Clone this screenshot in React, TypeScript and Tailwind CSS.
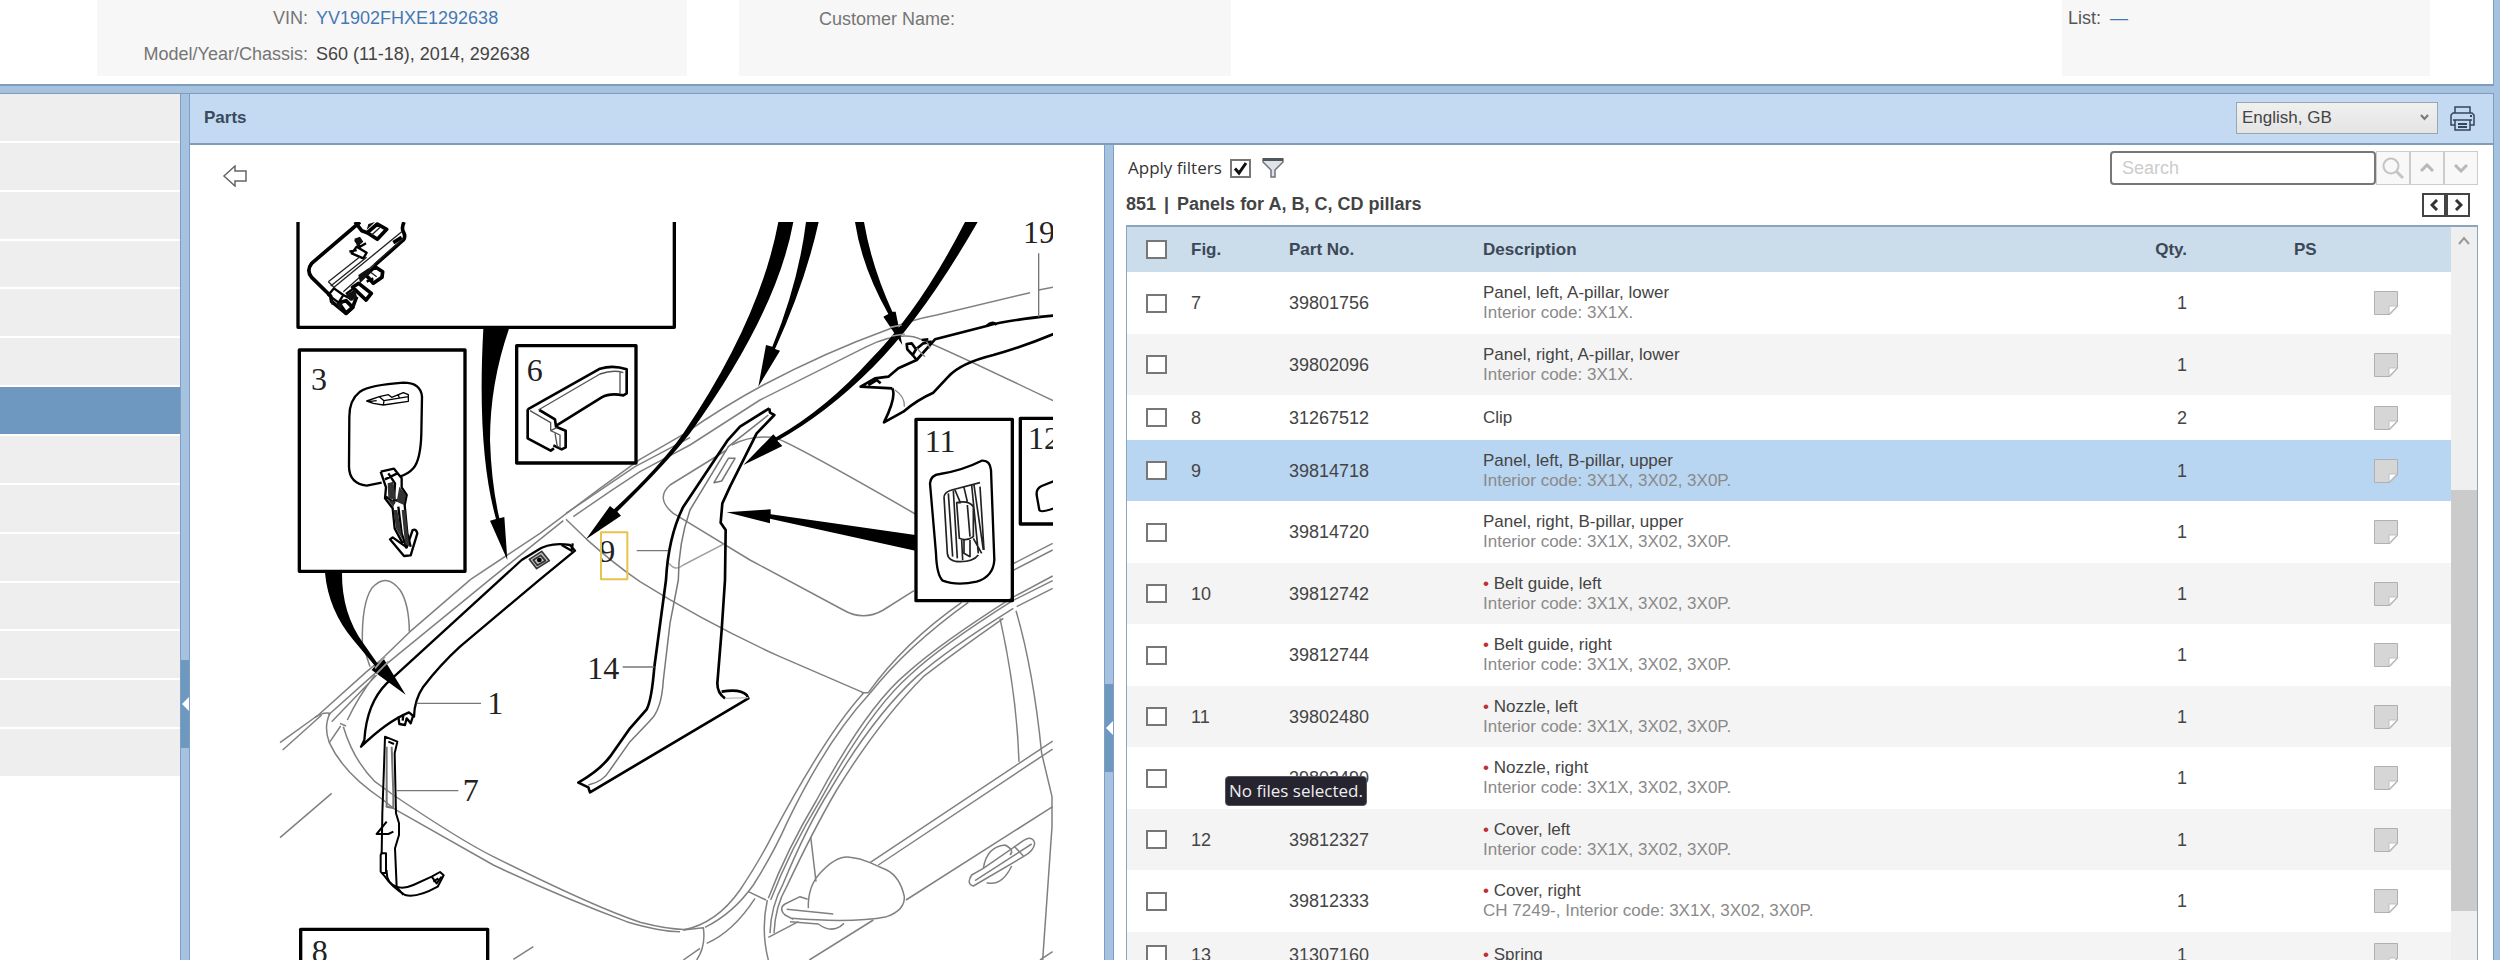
import { useState } from 'react';

type Part = {
    fig?: string;
    partNo: string;
    name: string;
    note?: string;
    qty: number;
    sub?: boolean;
};

const INTERIOR = 'Interior code: 3X1X, 3X02, 3X0P.';

const parts: Part[] = [
    { fig: '7', partNo: '39801756', name: 'Panel, left, A-pillar, lower', note: 'Interior code: 3X1X.', qty: 1 },
    { partNo: '39802096', name: 'Panel, right, A-pillar, lower', note: 'Interior code: 3X1X.', qty: 1 },
    { fig: '8', partNo: '31267512', name: 'Clip', qty: 2 },
    { fig: '9', partNo: '39814718', name: 'Panel, left, B-pillar, upper', note: INTERIOR, qty: 1 },
    { partNo: '39814720', name: 'Panel, right, B-pillar, upper', note: INTERIOR, qty: 1 },
    { fig: '10', partNo: '39812742', name: 'Belt guide, left', note: INTERIOR, qty: 1, sub: true },
    { partNo: '39812744', name: 'Belt guide, right', note: INTERIOR, qty: 1, sub: true },
    { fig: '11', partNo: '39802480', name: 'Nozzle, left', note: INTERIOR, qty: 1, sub: true },
    { partNo: '39802490', name: 'Nozzle, right', note: INTERIOR, qty: 1, sub: true },
    { fig: '12', partNo: '39812327', name: 'Cover, left', note: INTERIOR, qty: 1, sub: true },
    { partNo: '39812333', name: 'Cover, right', note: 'CH 7249-, ' + INTERIOR, qty: 1, sub: true },
    { fig: '13', partNo: '31307160', name: 'Spring', qty: 1, sub: true },
];

const menuRows = Array.from({ length: 14 }, (_, i) => i);

function Checkbox({ label, defaultChecked = false }: { label: string; defaultChecked?: boolean }) {
    return (
        <span className="relative block h-[19px] w-[21px]">
            <input
                type="checkbox"
                aria-label={label}
                defaultChecked={defaultChecked}
                className="peer block h-[19px] w-[21px] appearance-none border-2 border-[#777] bg-white"
            />
            <svg viewBox="0 0 21 19" fill="none" stroke="#111" strokeWidth={3} className="pointer-events-none absolute inset-0 hidden peer-checked:block">
                <path d="M5 9.5 9 14 16 4" />
            </svg>
        </span>
    );
}

function NoteIcon() {
    return (
        <svg width="24" height="24" viewBox="0 0 24 24" className="block">
            <path d="M.5.5h23v15l-7.5 8H.5z" fill="#d6d6d6" stroke="#b0b0b0" />
            <path d="M15 23v-8h8z" fill="#fff" stroke="#c0c0c0" />
        </svg>
    );
}

function Splitter({ handle }: { handle: string }) {
    return (
        <div className="w-[10px] shrink-0 border-x border-[#7f9fc0] bg-[#a5c2e0]">
            <button aria-label="Collapse panel" className={`flex h-[88px] w-full items-center justify-center bg-[#6f98c0] ${handle}`}>
                <svg width="7" height="14" viewBox="0 0 7 14" fill="#fff">
                    <path d="M7 0v14L0 7z" />
                </svg>
            </button>
        </div>
    );
}

function Header() {
    return (
        <header className="mr-[6px] flex h-[86px] shrink-0 border-r border-b-2 border-[#7f9db8] bg-white text-[18px] leading-9 text-[#757575]">
            <dl className="ml-[97px] grid h-[76px] w-[590px] grid-cols-[211px_1fr] content-start gap-x-2 bg-[#f7f7f7]">
                <dt className="text-right">VIN:</dt>
                <dd>
                    <a href="#vin" className="text-[#4579b4]">YV1902FHXE1292638</a>
                </dd>
                <dt className="text-right">Model/Year/Chassis:</dt>
                <dd className="text-[#444]">S60 (11-18), 2014, 292638</dd>
            </dl>
            <div className="ml-[52px] h-[76px] w-[492px] bg-[#f7f7f7] pt-px pl-20">Customer Name:</div>
            <div className="mr-[63px] ml-auto h-[76px] w-[368px] bg-[#f7f7f7] pl-[6px] text-[#555]">
                List: <a href="#list" className="ml-1 text-[#4579b4]">—</a>
            </div>
        </header>
    );
}

function Sidebar() {
    return (
        <nav className="w-[180px] shrink-0 bg-white">
            <ul className="flex h-[684px] flex-col">
                {menuRows.map((i) => (
                    <li key={i} className={`flex-1 border-b-2 border-white ${i === 6 ? 'bg-[#6f98c0]' : 'bg-[#eeeeee]'}`} />
                ))}
            </ul>
        </nav>
    );
}

// exploded view of the pillar panels
function Diagram() {
    return (
        <svg width="793" height="738" viewBox="0 66 2379 2214" fill="none" strokeLinejoin="round" className="ml-[70px] block shrink-0">
            {/* car body */}
            <g stroke="#808080" strokeWidth={4.5}>
                <path d="M632 1138 L840 1000 L1020 865 L1140 778 L1275 700 Q1390 620 1510 555 Q1700 455 1880 390 Q1950 360 2030 345 L2310 278" />
                <path d="M2336 270 L2379 262" />
                <path d="M632 1138 L450 1295 L360 1382 L320 1415 L175 1545 L60 1628" />
                <path d="M690 1138 L910 962 M690 1138 L345 1420 L205 1545" />
                <path d="M918 940 L1125 800 L1290 713" />
                <path d="M940 950 Q1040 880 1140 815 L1290 735 L1500 600 Q1700 500 1820 440 Q1900 400 1960 410 Q2000 420 2379 602" />
                <path d="M918 958 L980 1018 Q1060 1090 1140 1145 Q1340 1270 1560 1370 L1810 1478" />
                <path d="M330 1400 L307 1330 Q305 1210 335 1165 Q378 1115 420 1170 Q447 1210 448 1295" />
                <path d="M165 1552 Q190 1535 210 1540 Q190 1580 208 1628 Q250 1720 370 1800 L400 1825 L700 1995 Q900 2090 1100 2165 Q1200 2195 1260 2195" />
                <path d="M208 1628 L242 1578 M240 1570 L258 1578 M250 1580 Q280 1680 345 1745 L400 1785 Q600 1920 700 1970 Q1000 2120 1140 2167 Q1230 2190 1280 2188" />
                <path d="M68 1650 L185 1545 M215 1565 L350 1425 M262 1560 Q295 1490 345 1425" />
                <path d="M60 1913 L215 1780 M760 2278 L820 2240" />
                <path d="M1415 735 Q1470 705 1540 712 Q1580 720 1966 942" />
                <path d="M1400 750 L1230 855 Q1185 895 1240 940 L1470 1080 L1750 1230 Q1810 1265 1870 1230 L1962 1172" />
                <path d="M1228 1090 Q1245 1115 1270 1095 L1395 1030" stroke="#a0a0a0" />
            </g>
            <g transform="translate(1140 1080)" stroke="#808080" strokeWidth={4.5}>
                <path d="M130 1110 Q230 1090 300 990 Q360 900 400 820 Q560 520 670 400 M665 398 H685 Q790 250 965 127 M690 400 Q800 260 985 127" />
                <path d="M195 1102 Q280 1060 340 975 Q400 880 440 790 Q560 540 690 400" />
                <path d="M385 1015 Q440 870 530 720 Q680 440 800 340 Q900 250 1118 112 L1238 48" />
                <path d="M392 1020 Q450 870 540 722 Q690 450 810 345 Q900 260 1118 122 L1238 62" />
                <path d="M390 1120 Q392 1040 430 970 Q500 800 570 690 Q700 470 830 350 Q920 270 1120 145" />
                <path d="M402 1120 Q405 1040 440 980 Q520 810 590 690 Q720 480 850 350 Q940 280 1090 175 M1130 140 L1238 85" />
                <path d="M1118 12 L1238 -50 M1118 32 L1238 -30" />
                <path d="M385 1200 Q362 1110 382 1020 M325 995 L378 1020 M200 1150 Q280 1115 345 1015" />
                <path d="M130 1110 L190 1103 Q198 1160 170 1200 M130 1200 L180 1165" />
                <path d="M1080 175 Q1130 400 1137 605 M1128 152 Q1180 330 1205 580 L1236 710 V800 L1208 1200 M1200 1200 L1238 1175" />
                <path d="M690 908 L1238 543 M715 915 L1238 567 M798 1020 L1238 740 M508 1200 L700 1080 M385 1132 L475 1085" />
                <path d="M512 830 L528 965 M505 1045 Q503 980 540 940 Q590 885 630 892 Q660 895 690 908 L740 930 Q780 950 793 1010 Q795 1050 740 1070 Q640 1090 455 1075" />
                <path d="M503 1018 L480 1010 L435 1032 Q415 1045 435 1065 L460 1078 M440 1048 L580 1062 M450 1085 L535 1092 Q570 1118 600 1100 L612 1090" />
                <path d="M1000 978 Q978 972 995 945 L1030 925 L1150 842 Q1178 825 1184 850 Q1182 872 1150 890 Z M1005 962 L1175 852 M1122 858 L1150 888" />
                <path d="M1030 925 Q1040 860 1095 855 Q1125 870 1110 885 M1040 968 Q1085 980 1115 918" />
            </g>

            {/* callout arrows */}
            <g fill="#000">
                <path d="M670 386 H747 Q690 550 690 720 Q694 850 718 955 L733 951 L742 1080 L690 962 L708 957 Q650 750 670 386Z" />
                <path d="M195 1118 H246 Q245 1240 310 1330 L352 1390 L372 1378 L437 1484 L335 1410 L345 1398 L280 1320 Q205 1230 195 1118Z" />
                <path d="M1555 66 H1600 Q1550 340 1290 700 Q1220 790 1072 935 L1083 947 L978 1018 L1050 918 L1062 928 Q1200 800 1270 700 Q1500 360 1555 66Z" />
                <path d="M1638 66 H1676 Q1635 250 1545 447 L1560 452 L1495 560 L1518 435 L1537 440 Q1615 250 1638 66Z" />
                <path d="M1785 66 H1812 Q1835 200 1897 335 H1907 L1927 435 L1870 350 L1885 342 Q1805 200 1785 66Z" />
                <path d="M2115 66 H2153 Q1990 350 1840 500 Q1700 640 1552 722 L1567 738 L1450 795 L1540 703 L1548 712 Q1700 625 1830 480 Q1980 330 2115 66Z" />
                <path d="M1966 1005 L1532 943 V928 L1400 937 L1530 970 V956 L1966 1052Z" />
            </g>
            <path d="M345 1405 L375 1370 M350 1420 L385 1385 M1890 382 L1925 375 M1895 408 L1935 402" stroke="#999" strokeWidth={5} />

            {/* call-out frames */}
            <g stroke="#000" strokeWidth={10}>
                <path d="M114 60 V382 H1243 V60" />
                <rect x="118" y="450" width="497" height="664" />
                <rect x="770" y="437" width="358" height="352" />
                <rect x="1968" y="658" width="289" height="544" />
                <path d="M2390 655 H2281 V972 H2390" />
                <path d="M122 2290 V2188 H683 V2290" />
            </g>

            {/* bracket in the upper frame */}
            <g stroke="#000" strokeWidth={11}>
                <path d="M300 66 L155 190 Q138 212 155 232 L212 288 L215 305 L258 340 L278 322 L290 290 M345 195 L430 120 Q438 110 430 95 Q424 85 432 66" />
                <path d="M278 262 L296 250 L334 280 L318 300Z M318 225 L345 200 L368 215 L366 232 L340 250Z M236 308 L258 340 L278 322 L258 302Z M322 98 L352 72 L380 88 L352 118Z" />
                <path d="M285 66 L305 92 L322 98 M400 128 L425 112" />
            </g>
            <g stroke="#000" strokeWidth={7}>
                <path d="M205 285 L222 265 L250 285 L236 308Z M250 285 L278 300 M275 160 L310 175 L320 158 L290 140Z M285 120 L300 140 L318 130 M258 282 L285 262 M268 155 L290 150 M320 245 L340 235" />
            </g>
            <path d="M205 245 L300 170 M212 258 L320 172 M222 262 L425 95 M250 275 L430 115 M335 105 L362 80 M205 245 L225 265 M330 215 L350 230" stroke="#222" strokeWidth={4} />
            <path d="M283 116 L300 110 L310 125 L292 140Z M295 225 L325 205 L335 215 L300 250Z M258 285 L285 268 L292 295 L270 302Z M325 72 L345 66 L320 90Z M212 290 L222 312 L214 314Z M228 312 L250 305 L240 330Z" fill="#111" />

            {/* 3 */}
            <g stroke="#000" strokeWidth={7}>
                <path d="M365 848 L320 857 Q268 850 267 800 L268 650 Q268 600 300 575 Q330 555 430 548 Q482 548 486 590 L484 700 Q482 780 460 805 Q445 822 420 830" />
                <path d="M320 603 L358 590 L385 584 L395 592 L430 578 L445 584 V604 L370 615 L340 610Z M358 590 L372 602 L445 590 M372 602 L370 615 M415 583 L418 596 M325 605 L350 602" strokeWidth={4} />
                <path d="M362 815 L402 806 L425 835 V862 L440 885 L434 915 L442 1000 L452 1040 M362 815 L378 862 L375 895 L398 925 L404 985 L428 1030 M375 838 L412 820 M385 820 L405 850 L402 900 L432 905 M378 890 L405 910 M415 920 L425 1000 L440 1045" />
                <path d="M390 1018 L432 1068 L452 1066 L472 1000 Q468 985 458 990 L440 1042 L398 1012Z" />
            </g>
            <path d="M383 850 L400 845 L408 900 L385 895Z M418 860 L438 885 L432 915 L410 905Z M384 900 L405 905 L400 922Z M400 930 L412 930 L428 1020 L408 985Z M425 930 L436 930 L448 1040 L435 1030Z" fill="#333" />

            {/* 6 */}
            <path d="M803 628 L1020 506 Q1060 494 1100 508 V580 L1090 586 Q1050 578 1025 592 L890 676 M838 630 L885 658 L888 680 L917 692 V742 L905 748 L880 736 M882 745 L872 752 L803 715 V628" stroke="#000" strokeWidth={8} />
            <path d="M835 630 L1020 522 Q1060 508 1090 518 M1080 515 V580 M810 632 L872 668 V692 L900 705 V745 M872 692 L890 683 M885 700 L892 740" stroke="#555" strokeWidth={4} />

            {/* 1 */}
            <g stroke="#000" strokeWidth={7}>
                <path d="M303 1640 L313 1620 Q320 1510 380 1450 L785 1080 L830 1052 Q870 1025 930 1035 L945 1052 L840 1138 L600 1340 Q540 1395 490 1460 Q463 1500 462 1550 L447 1537 Q380 1565 303 1640Z" />
                <path d="M415 1550 L418 1572 L435 1575 L440 1555 L452 1570 L460 1545 M430 1545 L428 1562 M905 1035 L935 1052 L938 1030" />
            </g>
            <path d="M808 1078 L845 1054 L868 1082 L830 1106Z M820 1080 L842 1066 L856 1082 L832 1096Z" stroke="#333" strokeWidth={5} fill="#bbb" />
            <circle cx="838" cy="1080" r="7" fill="#000" />

            {/* 7 */}
            <g stroke="#000" strokeWidth={6}>
                <path d="M375 1610 L412 1625 L404 1660 L408 1840 L417 1870 V1905 L405 1945 L410 2060 Q430 2068 460 2055 L515 2030 L540 2016 L551 2026 L533 2060 Q470 2095 435 2085 Q395 2060 375 2030 L362 2015 V1965 L365 1960 L367 1840 L372 1700Z" />
                <path d="M380 1865 L350 1902 H385 L400 1895 M362 1960 H378 V2018 L365 2020 M385 1625 L402 1632 M380 2010 Q378 2050 410 2060 L430 2085 M515 2030 L530 2050 L545 2030 M520 2045 L535 2035" />
                <path d="M380 1640 V1820 L400 1824 V1780 L395 1640" stroke="#777" />
            </g>

            {/* 14 */}
            <g stroke="#000" strokeWidth={8}>
                <path d="M1528 625 L1440 680 L1402 722 L1270 920 Q1225 1010 1218 1140 L1183 1401 Q1175 1500 1160 1528 L1110 1585 L1050 1670 Q1020 1710 955 1748 L985 1762 L990 1777 L1465 1495 L1460 1485 Q1440 1465 1385 1475" />
                <path d="M1528 625 L1530 638 L1543 645 L1490 700 L1410 860 L1387 910 L1382 968 L1397 990 L1395 1140 L1385 1290 L1372 1450 Q1372 1480 1395 1495" />
            </g>
            <path d="M1525 645 L1405 740 L1290 930 Q1255 1030 1255 1140 L1230 1270 L1210 1440 Q1205 1530 1170 1562 L1110 1625 L1050 1710 Q1030 1745 985 1755 M1405 775 H1425 L1385 843 L1362 848Z" stroke="#777" strokeWidth={4.5} />
            <path d="M1395 1495 L1465 1493" stroke="#bbb" strokeWidth={4} />

            {/* 19 */}
            <g stroke="#000" strokeWidth={8}>
                <path d="M1897 565 L1802 560 L1845 535 L1885 530 L1915 505 L1970 480 L2025 418 L2180 378 Q2240 360 2390 346" />
                <path d="M2390 398 Q2290 440 2200 465 Q2100 490 2065 530 L2020 578 Q1970 600 1930 635 L1872 667 Q1910 590 1897 565" />
                <path d="M1940 432 L1955 430 L1968 448 L1958 465 L1942 448Z M1968 448 L1990 430 L2015 425 M1958 465 L1970 480 M1985 420 L2005 418 M1825 555 L1850 540 L1862 550 M2180 378 Q2195 362 2210 374" />
            </g>
            <path d="M1905 570 Q1935 590 1933 620 M1970 445 L1995 470 M2000 425 L2010 445" stroke="#888" strokeWidth={4} />

            {/* 11 */}
            <path d="M2010 850 Q2012 825 2040 822 Q2110 810 2165 782 Q2190 780 2193 810 L2203 1080 Q2200 1130 2150 1145 Q2090 1158 2048 1142 Q2030 1125 2028 1060Z" stroke="#000" strokeWidth={7} />
            <path d="M2052 890 Q2055 875 2075 870 L2160 848 M2052 890 L2062 1060 Q2065 1085 2100 1085 Q2140 1085 2155 1065 M2065 880 L2078 1070 M2080 872 L2092 1075 M2085 870 L2102 910 M2112 862 L2122 905 M2135 855 L2155 1060 M2142 855 L2170 1050 M2160 860 L2172 1050 M2090 908 Q2125 900 2140 920 V1010 Q2120 1025 2098 1015Z M2122 915 L2130 1010 M2105 1020 L2108 1080 M2112 1020 V1060 L2130 1070 V1020 M2140 1015 L2165 1060" stroke="#222" strokeWidth={5} />
            <path d="M2390 840 L2345 858 Q2328 866 2330 885 L2338 930 Q2342 940 2390 922" stroke="#000" strokeWidth={7} />

            {/* leaders and numbers */}
            <path d="M470 1510 H663 M408 1772 H595 M1088 1401 H1183 M1130 1052 H1225 M2336 160 V350" stroke="#777" strokeWidth={4} />
            <g fill="#222" fontSize="96" fontFamily="'Liberation Serif', serif">
                <text x="153" y="571">3</text>
                <text x="800" y="542">6</text>
                <text x="2289" y="130">19</text>
                <text x="1994" y="755">11</text>
                <text x="2304" y="747">12</text>
                <text x="1018" y="1085">9</text>
                <text x="982" y="1437">14</text>
                <text x="682" y="1543">1</text>
                <text x="608" y="1803">7</text>
                <text x="155" y="2285">8</text>
            </g>
            <rect x="1023" y="997" width="79" height="141" stroke="#e6c34e" strokeWidth={6} />
        </svg>
    );
}

function Toolbar() {
    return (
        <div className="flex h-10 shrink-0 items-start pt-[6px] pr-[15px] pl-[14px]">
            <div className="flex h-[33px] items-center pt-px">
                <span className="mr-2 font-['Open_Sans','Noto_Sans',sans-serif] text-[17px] text-[#333]">Apply filters</span>
                <Checkbox label="Apply filters" defaultChecked />
                <button aria-label="Edit filters" className="ml-[11px]">
                    <svg width="22" height="20" viewBox="0 0 22 20">
                        <path d="M1 1h20v3l-8 8v7H9v-7L1 4z" fill="#dfe3e8" stroke="#6d747c" strokeWidth={1.5} />
                        <path d="M1 1.5h20" stroke="#50565e" strokeWidth={3} />
                    </svg>
                </button>
            </div>
            <div className="ml-auto flex h-[34px]">
                <input
                    type="text"
                    aria-label="Search"
                    placeholder="Search"
                    className="w-[266px] rounded-[4px] border-2 border-[#777] bg-white px-[10px] text-[18px] placeholder:text-[#cccccc]"
                />
                <button aria-label="Find" className="flex w-[34px] items-center justify-center border border-[#ccc] bg-[#f8f8f8]">
                    <svg width="22" height="22" viewBox="0 0 22 22" fill="none" stroke="#c4c4c4" strokeWidth={2}>
                        <circle cx="9" cy="9" r="7.5" />
                        <path d="m14 14 7 7" strokeWidth={3} />
                    </svg>
                </button>
                <button aria-label="Previous match" className="flex w-[34px] items-center justify-center border border-[#ccc] bg-[#f8f8f8]">
                    <svg width="14" height="10" viewBox="0 0 14 10" fill="none" stroke="#b8b8b8" strokeWidth={3}>
                        <path d="m1 8 6-6 6 6" />
                    </svg>
                </button>
                <button aria-label="Next match" className="flex w-[34px] items-center justify-center border border-[#ccc] bg-[#f8f8f8]">
                    <svg width="14" height="10" viewBox="0 0 14 10" fill="none" stroke="#b8b8b8" strokeWidth={3}>
                        <path d="m1 2 6 6 6-6" />
                    </svg>
                </button>
            </div>
        </div>
    );
}

function PartsTable() {
    return (
        <div className="mr-[15px] ml-3 flex min-h-0 flex-1 overflow-hidden border-x border-t-2 border-[#8aa5bd]">
            <div className="min-w-0 flex-1">
                <table className="w-full table-fixed border-collapse text-left text-[17px] leading-5 text-[#444]">
                    <colgroup>
                        <col className="w-16" />
                        <col className="w-[98px]" />
                        <col className="w-[194px]" />
                        <col />
                        <col className="w-[100px]" />
                        <col className="w-[187px]" />
                        <col className="w-[77px]" />
                    </colgroup>
                    <thead>
                        <tr className="h-[45px] bg-[#cbdceb] text-[#3c4855]">
                            <th className="pl-[19px]">
                                <Checkbox label="Select all" />
                            </th>
                            <th>Fig.</th>
                            <th>Part No.</th>
                            <th>Description</th>
                            <th className="text-right">Qty.</th>
                            <th className="pl-[107px]">PS</th>
                            <th></th>
                        </tr>
                    </thead>
                    <tbody>
                        {parts.map((part, i) => {
                            const height = !part.note ? 'h-[45px]' : i % 2 ? 'h-[61px]' : 'h-[62px]';
                            const color = part.fig === '9' ? 'bg-[#b8d5f1]' : i % 2 ? 'bg-[#f4f4f4]' : 'bg-white';
                            return (
                                <tr key={part.partNo} className={`${height} ${color}`}>
                                    <td className="pl-[19px]">
                                        <Checkbox label={`Select ${part.partNo}`} />
                                    </td>
                                    <td className="text-[18px]">{part.fig}</td>
                                    <td className="relative text-[18px]">
                                        {part.partNo}
                                        {part.partNo === '39802490' && (
                                            <span role="tooltip" className="absolute top-[29px] -left-16 flex h-[30px] items-center rounded-[4px] border border-[#55545e] bg-[#25242f] px-[3px] font-['Open_Sans','Noto_Sans',sans-serif] text-[17px] whitespace-nowrap text-[#eee]">
                                                No files selected.
                                            </span>
                                        )}
                                    </td>
                                    <td>
                                        <div>
                                            {part.sub && <span className="text-[#c03030]">• </span>}
                                            {part.name}
                                        </div>
                                        {part.note && <div className="text-[#8a8a8a]">{part.note}</div>}
                                    </td>
                                    <td className="text-right text-[18px]">{part.qty}</td>
                                    <td></td>
                                    <td>
                                        <button aria-label={`Note for ${part.partNo}`} className="block">
                                            <NoteIcon />
                                        </button>
                                    </td>
                                </tr>
                            );
                        })}
                    </tbody>
                </table>
            </div>
            <div className="flex w-[26px] shrink-0 flex-col items-center bg-[#efefef]">
                <svg width="12" height="9" viewBox="0 0 12 9" fill="none" stroke="#999" strokeWidth={2} className="mt-[9px] shrink-0">
                    <path d="m1 8 5-6 5 6" />
                </svg>
                <div className="mt-[245px] h-[421px] w-full shrink-0 bg-[#cbcbcb]" />
            </div>
        </div>
    );
}

function App() {
    const [language, setLanguage] = useState('en-GB');

    return (
        <div className="flex h-screen flex-col overflow-hidden bg-[#a5c2e0] font-['Liberation_Sans',Arial,sans-serif]">
            <Header />
            <div className="mt-[7px] mr-[6px] flex min-h-0 flex-1 border-t border-r border-[#7f9db8]">
                <Sidebar />
                <Splitter handle="mt-[566px]" />
                <main className="flex min-w-0 flex-1 flex-col">
                    <div className="flex h-[51px] shrink-0 items-center border-b-2 border-[#7f9db8] bg-[#c4daf2] pr-[18px] pb-px pl-[14px]">
                        <h1 className="text-[17px] font-bold text-[#3a4a5c]">Parts</h1>
                        <div className="relative ml-auto">
                            <select
                                aria-label="Language"
                                value={language}
                                onChange={(e) => setLanguage(e.target.value)}
                                className="block h-8 w-[202px] appearance-none border border-[#9aa6b2] bg-linear-to-b from-[#f0f0f0] to-[#e4e4e4] pl-[5px] text-[17px] text-[#444]"
                            >
                                <option value="en-GB">English, GB</option>
                                <option value="en-US">English, US</option>
                            </select>
                            <svg width="9" height="7" viewBox="0 0 9 7" fill="none" stroke="#777" strokeWidth={2} className="pointer-events-none absolute top-3 right-[9px]">
                                <path d="m1 1 3.5 4L8 1" />
                            </svg>
                        </div>
                        <button aria-label="Print" className="ml-3">
                            <svg width="25" height="25" viewBox="0 0 25 25" fill="none" stroke="#34465a" strokeWidth={1.5}>
                                <path d="M5 7V1h15v6M5 19H1V9l2-2h19l2 2v10h-4" />
                                <path d="M5 14h15v10H5zM3 14h19" />
                                <path d="M8 18h9M8 21h9M20 10h2" strokeWidth={2} />
                            </svg>
                        </button>
                    </div>
                    <div className="flex min-h-0 flex-1 bg-white">
                        <section className="flex min-w-0 grow-914 basis-0 flex-col overflow-hidden">
                            <div className="h-[77px] shrink-0 pt-[20px] pl-[32px]">
                                <button aria-label="Back" className="block">
                                    <svg width="26" height="22" viewBox="0 0 26 22" fill="none" stroke="#666" strokeWidth={1.5}>
                                        <path d="M13 1 2 11l11 10v-5h11V6H13z" />
                                    </svg>
                                </button>
                            </div>
                            <Diagram />
                        </section>
                        <Splitter handle="mt-[539px]" />
                        <section className="flex min-w-0 grow-1379 basis-0 flex-col overflow-hidden">
                            <Toolbar />
                            <div className="flex h-10 shrink-0 items-center pr-[23px] pb-px pl-3">
                                <h2 className="flex gap-2 text-[18px] font-bold text-[#444]">
                                    <span>851</span>
                                    <span>|</span>
                                    <span>Panels for A, B, C, CD pillars</span>
                                </h2>
                                <div className="ml-auto flex">
                                    <button aria-label="Previous section" className="flex h-6 w-6 items-center justify-center border-2 border-[#444] bg-white">
                                        <svg width="9" height="12" viewBox="0 0 9 12" fill="none" stroke="#333" strokeWidth={3}>
                                            <path d="M7 1 2 6l5 5" />
                                        </svg>
                                    </button>
                                    <button aria-label="Next section" className="flex h-6 w-6 items-center justify-center border-2 border-[#444] bg-white">
                                        <svg width="9" height="12" viewBox="0 0 9 12" fill="none" stroke="#333" strokeWidth={3}>
                                            <path d="m2 1 5 5-5 5" />
                                        </svg>
                                    </button>
                                </div>
                            </div>
                            <PartsTable />
                        </section>
                    </div>
                </main>
            </div>
        </div>
    );
}

export default App;
